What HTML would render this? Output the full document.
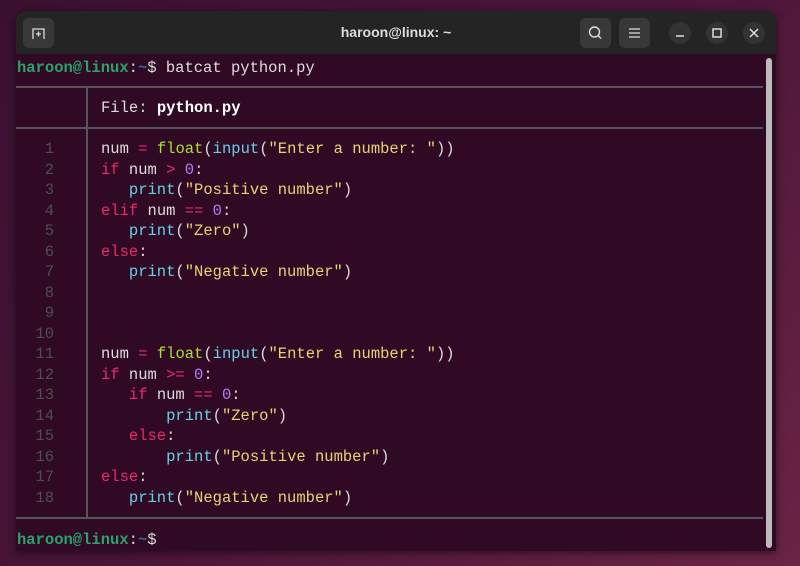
<!DOCTYPE html>
<html><head><meta charset="utf-8"><style>
html,body{margin:0;padding:0;width:800px;height:566px;overflow:hidden;}
body{background:linear-gradient(135deg,#3a1030 0%,#4a1538 50%,#6a2445 100%);position:relative;font-family:"Liberation Mono",monospace;}
.win{position:absolute;left:16px;top:11px;width:760px;height:540px;background:#300a24;border-radius:10px 10px 0 0;overflow:hidden;box-shadow:0 2px 8px rgba(0,0,0,.5);}
.tb{position:absolute;left:0;top:0;width:760px;height:43px;background:#242424;}
.btn{position:absolute;top:7px;width:31px;height:30px;background:#383838;border-radius:6px;}
.circ{position:absolute;top:11px;width:22px;height:22px;border-radius:11px;background:#333;}
.title{position:absolute;left:0;width:760px;top:13px;text-align:center;color:#ddd;font:bold 14px "Liberation Sans",sans-serif;}
.l{position:absolute;white-space:pre;font-size:15.5px;line-height:20px;color:#dcdcdc;}
.n{position:absolute;width:38px;text-align:right;left:0;color:#4e4e4e;font-size:15.5px;line-height:20.5px;white-space:pre;}
.g{color:#2aa36b;font-weight:bold}.b{color:#3465a4;font-weight:bold}
.k{color:#ea2a6c}.f{color:#a6e22e}.c{color:#66d0e6}.s{color:#e2d576}.d{color:#ae81ff}
.hr{position:absolute;left:0;width:747px;height:2px;background:#555;}
</style></head><body>
<div class="win">
<div class="tb">
 <div class="btn" style="left:7px"><svg width="31" height="30"><path d="M10 21V11h11v10M13 16h5M15.5 13.5v5" stroke="#ddd" stroke-width="1.3" fill="none"/></svg></div>
 <div class="title">haroon@linux: ~</div>
 <div class="btn" style="left:564px"><svg width="31" height="30"><circle cx="14.5" cy="14" r="5" stroke="#ddd" stroke-width="1.4" fill="none"/><path d="M18 17.5l3 3" stroke="#ddd" stroke-width="1.4"/></svg></div>
 <div class="btn" style="left:603px"><svg width="31" height="30"><path d="M10 11h11M10 15h11M10 19h11" stroke="#ddd" stroke-width="1.3"/></svg></div>
 <div class="circ" style="left:653px"><svg width="22" height="22"><path d="M7 14h8" stroke="#ddd" stroke-width="1.5"/></svg></div>
 <div class="circ" style="left:690px"><svg width="22" height="22"><rect x="7" y="7" width="8" height="8" stroke="#ddd" stroke-width="1.5" fill="none"/></svg></div>
 <div class="circ" style="left:727px"><svg width="22" height="22"><path d="M7 7l8 8M15 7l-8 8" stroke="#ddd" stroke-width="1.5"/></svg></div>
</div>
<div style="position:absolute;left:750px;top:47px;width:6px;height:490px;background:#bbb;border-radius:3px"></div>
<div class="l" style="left:1px;top:47px"><span class="g">haroon@linux</span>:<span class="b">~</span>$ batcat python.py</div>
<div class="hr" style="top:75px"></div>
<div style="position:absolute;left:70px;top:76px;width:2px;height:431px;background:#555"></div>
<div class="l" style="left:85px;top:87px">File: <b style="color:#fff">python.py</b></div>
<div class="hr" style="top:116px"></div>
<div class="hr" style="top:506px"></div>
<div class="n" style="top:128px">1
2
3
4
5
6
7
8
9
10
11
12
13
14
15
16
17
18</div>
<div class="l" style="left:85px;top:128px;line-height:20.5px">num <span class="k">=</span> <span class="f">float</span>(<span class="c">input</span>(<span class="s">"Enter a number: "</span>))
<span class="k">if</span> num <span class="k">&gt;</span> <span class="d">0</span>:
   <span class="c">print</span>(<span class="s">"Positive number"</span>)
<span class="k">elif</span> num <span class="k">==</span> <span class="d">0</span>:
   <span class="c">print</span>(<span class="s">"Zero"</span>)
<span class="k">else</span>:
   <span class="c">print</span>(<span class="s">"Negative number"</span>)



num <span class="k">=</span> <span class="f">float</span>(<span class="c">input</span>(<span class="s">"Enter a number: "</span>))
<span class="k">if</span> num <span class="k">&gt;=</span> <span class="d">0</span>:
   <span class="k">if</span> num <span class="k">==</span> <span class="d">0</span>:
       <span class="c">print</span>(<span class="s">"Zero"</span>)
   <span class="k">else</span>:
       <span class="c">print</span>(<span class="s">"Positive number"</span>)
<span class="k">else</span>:
   <span class="c">print</span>(<span class="s">"Negative number"</span>)</div>
<div class="l" style="left:1px;top:519px"><span class="g">haroon@linux</span>:<span class="b">~</span>$</div>
</div>
</body></html>
